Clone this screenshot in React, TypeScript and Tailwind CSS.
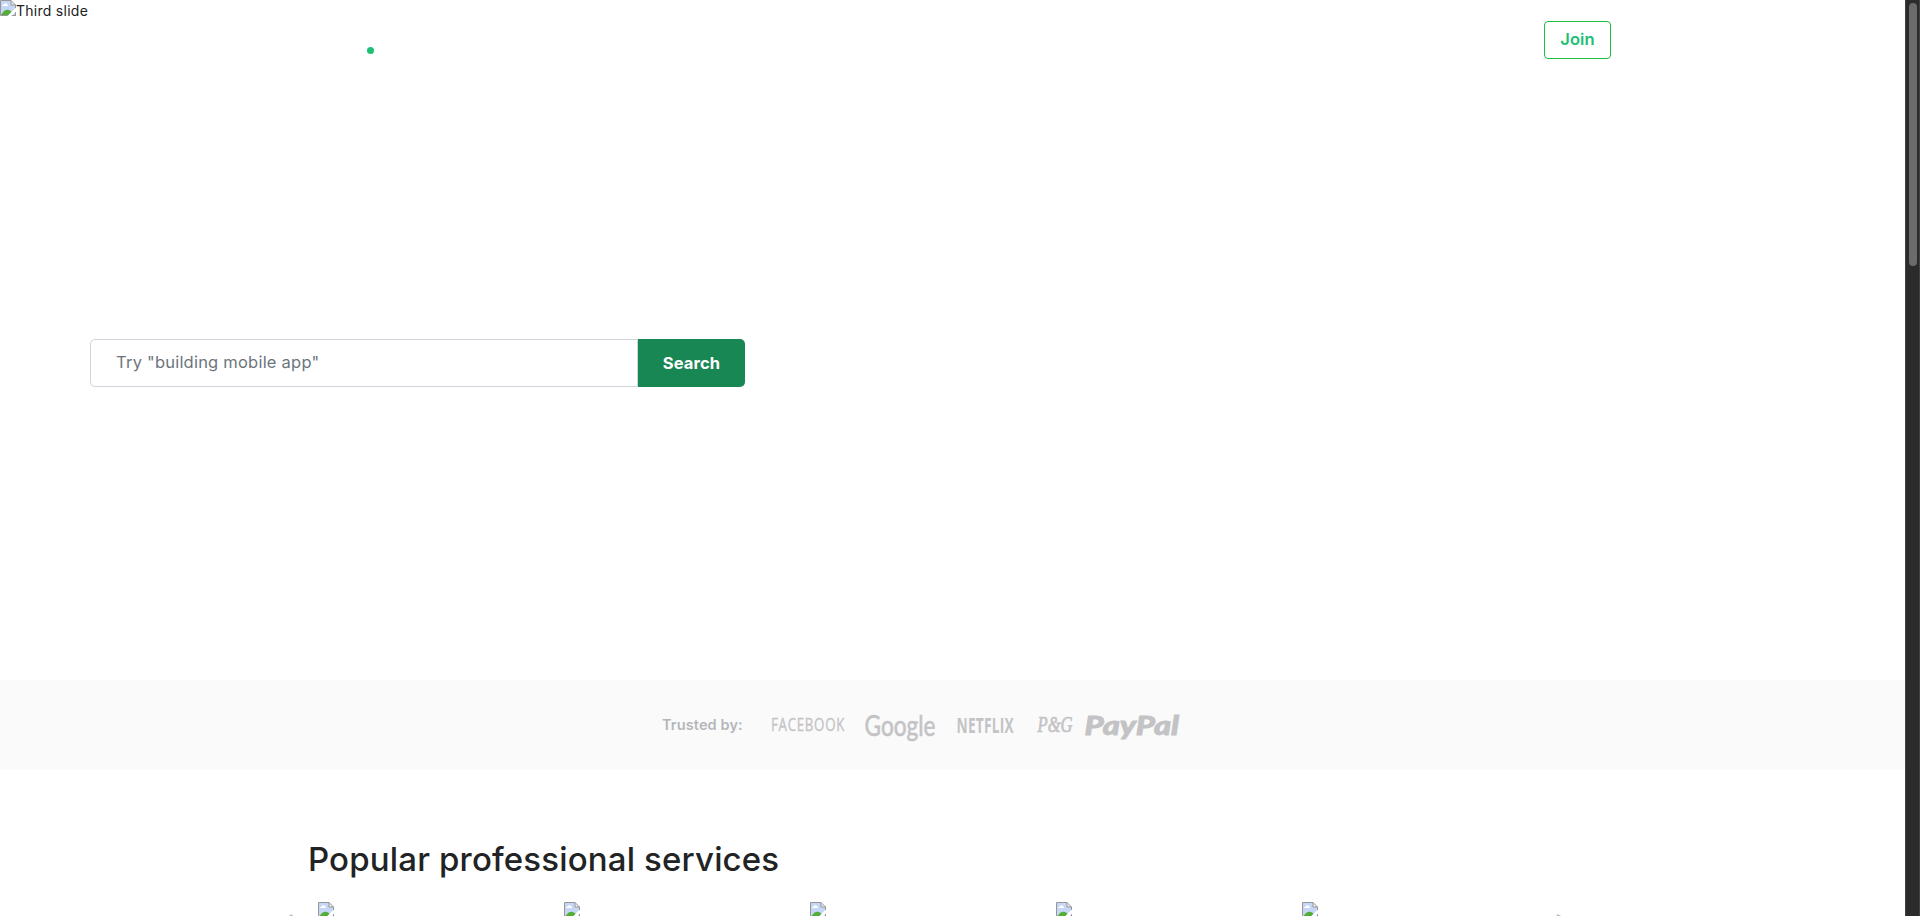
import React from "react";

function BrokenImage() {
  return (
    <svg width="16" height="16" viewBox="0 0 16 16" className="block shrink-0" aria-hidden="true">
      <path d="M.5 .5H11L15.5 5V15.5H.5Z" fill="#c5d6f6" />
      <path d="M2.2 6C2.2 4.8 3.2 4.6 3.8 4.6C4.2 2.8 6.8 2.8 7 4.5C8.2 4.3 8.5 6 7.4 6Z" fill="#fff" />
      <path d="M1 15C3 11.5 5 9.7 7.5 9.7C9.4 9.7 10.8 10.8 11.8 12L9 15Z" fill="#54ad36" />
      <path d="M11 .5V5H15.5Z" fill="#f4f4f4" />
      <path d="M16 15.5H.5V.5H11L15.5 5V16M11 .5V5H15.5" fill="none" stroke="#979797" />
      <path d="M15 8.3L16 8V11.5L11.5 16H7.5Z" fill="#fff" />
    </svg>
  );
}

function Brands() {
  return (
    <svg width="414" height="44" viewBox="0 0 414 44" className="block" fill="#c3c3c5">
      <text x="0" y="28" fontFamily="'Open Sans', sans-serif" fontSize="18" fontWeight="500" letterSpacing="1" stroke="#c3c3c5" strokeWidth=".3" textLength="74" lengthAdjust="spacingAndGlyphs">FACEBOOK</text>
      <text x="93.5" y="32.5" fontFamily="Lato, sans-serif" fontSize="29.5" stroke="#c3c3c5" strokeWidth=".6" textLength="71" lengthAdjust="spacingAndGlyphs">Google</text>
      <text x="185.5" y="29.5" fontFamily="'Open Sans', sans-serif" fontSize="20.5" fontWeight="700" letterSpacing=".4" textLength="57.5" lengthAdjust="spacingAndGlyphs">NETFLIX</text>
      <text x="266.5" y="29" fontFamily="'Liberation Serif', serif" fontSize="22.5" fontStyle="italic" stroke="#c3c3c5" strokeWidth=".7" textLength="35" lengthAdjust="spacingAndGlyphs">P&amp;G</text>
      <text x="313.5" y="31.5" fontFamily="Lato, sans-serif" fontSize="26" fontWeight="900" fontStyle="italic" stroke="#c3c3c5" strokeWidth=".8" textLength="94.5" lengthAdjust="spacingAndGlyphs">PayPal</text>
    </svg>
  );
}

const services = [1, 2, 3, 4, 5];

export default function App() {
  return (
    <div className="flex h-[916px] w-full overflow-hidden bg-white font-['Inter',sans-serif] text-[#212529]">
      <main className="relative flex min-w-0 flex-1 flex-col overflow-hidden">
        <div className="absolute top-0 left-0 flex">
          <BrokenImage />
          <span className="mt-[1px] text-[14px] leading-[20px] tracking-[0.27px] text-[#212121]">Third slide</span>
        </div>
        <header className="flex h-20 shrink-0 justify-between pr-[294px] pl-[367px]">
          <span className="mt-[47px] size-[7px] rounded-full bg-[#1dbf73]" />
          <button className="mt-[21px] flex h-[38px] w-[67px] items-center justify-center rounded border border-[#1dbf3f] pb-[2px] text-[16.5px] font-semibold tracking-[0.1px] text-[#1dbf73]">
            Join
          </button>
        </header>
        <section className="h-[600px] shrink-0 pt-[259px] pl-[90px]">
          <form className="flex h-12 w-[655px]">
            <input
              className="min-w-0 flex-1 rounded-l-[5px] border border-[#ced4da] pb-[2px] pl-[25px] text-[16.5px] tracking-[0.22px] placeholder:text-[#6c757d] placeholder:opacity-100"
              placeholder={'Try "building mobile app"'}
            />
            <button type="button" className="w-[107px] rounded-r-[5px] bg-[#198754] text-[16.5px] font-bold tracking-[0.1px] text-white">
              Search
            </button>
          </form>
        </section>
        <section className="flex h-[90px] shrink-0 items-center bg-[#fafafa] pl-[662px]">
          <span className="w-[109px] pb-[1px] text-[14.5px] font-semibold tracking-[0.12px] text-[#b5b6ba]">Trusted by:</span>
          <Brands />
        </section>
        <section className="shrink-0 pt-[65px] pl-[308px]">
          <h2 className="h-12 text-[33px] leading-[48px] font-medium tracking-[0.16px] whitespace-nowrap text-[#222325]">Popular professional services</h2>
          <div className="relative mt-[19px] flex gap-[230px] pl-[10px]">
            {services.map((n) => (
              <BrokenImage key={n} />
            ))}
            <svg className="absolute top-[12px] -left-[20px]" width="8" height="8" viewBox="0 0 8 8">
              <path d="M.5 2L4 .3L5.2 2.5L3 4Z" fill="#b8b8b8" />
            </svg>
            <svg className="absolute top-[12px] left-[1248px]" width="8" height="8" viewBox="0 0 8 8">
              <path d="M.8 0L5.4 2L4 4L1 3Z" fill="#b8b8b8" />
            </svg>
          </div>
        </section>
      </main>
      <aside className="h-full w-[15px] shrink-0 border-x border-[#424242] bg-[#2b2b2b] px-[3px] pt-[3px]">
        <div className="h-[263px] w-[8px] rounded-full bg-[#6b6b6b]" />
      </aside>
    </div>
  );
}
